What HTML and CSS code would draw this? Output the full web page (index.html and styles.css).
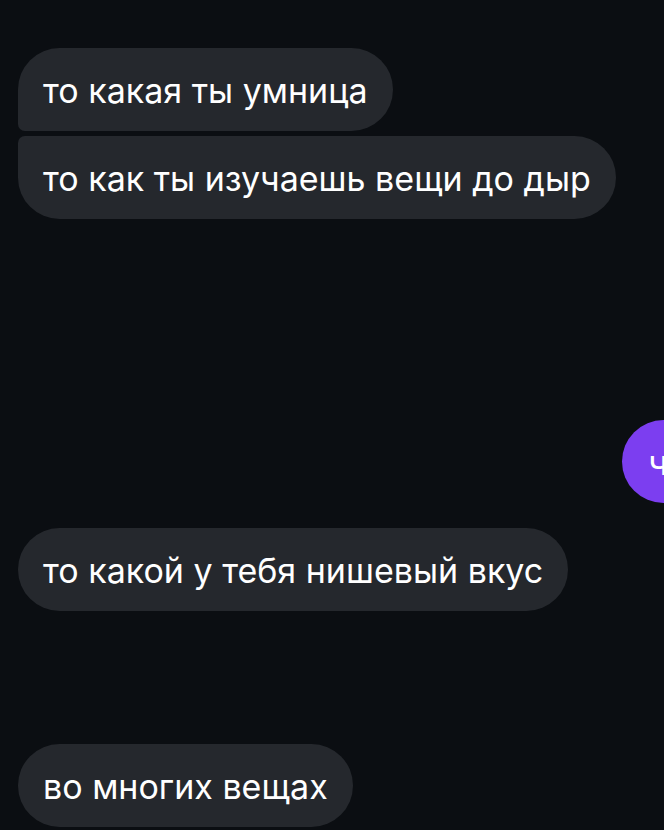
FILE: index.html
```html
<!DOCTYPE html>
<html lang="ru">
  <head>
    <meta charset="UTF-8" />
    <title>Чат</title>
    <link rel="stylesheet" href="styles.css">
  </head>
  <body>
    <div id="chat">
      <div class="group">
        <div class="bubble in first">то какая ты умница</div>
        <div class="bubble in last">то как ты изучаешь вещи до дыр</div>
      </div>

      <div class="bubble out">ч</div>

      <div class="bubble in single">то какой у тебя нишевый вкус</div>

      <div class="bubble in single late">во многих вещах</div>
    </div>
  </body>
</html>
```

FILE: styles.css
```css
html,
body {
  margin: 0;
  padding: 0;
  background: #0b0e12;
  overflow: hidden;
}

body {
  font-family: Inter, "Liberation Sans", Arial, sans-serif;
  color: #fff;
}

#chat {
  display: flex;
  flex-direction: column;
  align-items: flex-start;
  padding: 48px 0 0 18px;
  height: 830px;
  box-sizing: border-box;
}

.group {
  display: flex;
  flex-direction: column;
  align-items: flex-start;
  gap: 5px;
}

.bubble {
  height: 83px;
  box-sizing: border-box;
  padding: 0 25px;
  display: flex;
  align-items: center;
  font-size: 34px;
  line-height: 1;
  border-radius: 42px;
  white-space: nowrap;
  padding-top: 3px;
}

.in {
  background: #25282d;
}

.first {
  border-bottom-left-radius: 7px;
}

.last {
  border-top-left-radius: 7px;
}

.out {
  align-self: flex-end;
  background: #7c3ef0;
  margin-top: 201px;
  margin-right: -44px;
  padding: 3px 40px 0 26px;
}

.single {
  margin-top: 25px;
}

.late {
  margin-top: 133px;
}
```
